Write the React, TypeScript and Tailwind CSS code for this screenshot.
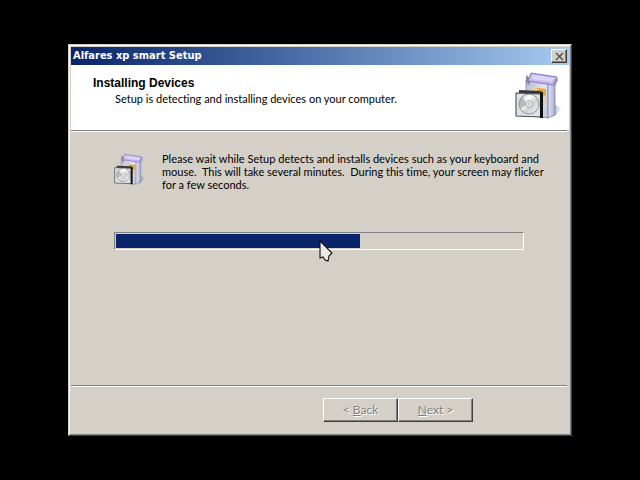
import { useId } from "react";

interface SetupIconProps {
  className?: string;
}

// Software box with a CD case leaning against it
const SetupIcon: React.FC<SetupIconProps> = ({ className }) => {
  const id = useId();
  const front = `${id}-front`;
  const side = `${id}-side`;
  const disc = `${id}-disc`;
  const shadow = `${id}-shadow`;

  return (
    <svg viewBox="0 0 48 48" className={className} aria-hidden="true">
      <defs>
        <linearGradient id={front} x1="0" y1="0" x2="1" y2="1">
          <stop offset="0" stopColor="#b4b9d6" />
          <stop offset="0.5" stopColor="#dfe3f3" />
          <stop offset="1" stopColor="#c3c8e0" />
        </linearGradient>
        <linearGradient id={side} x1="0" y1="0" x2="1" y2="0">
          <stop offset="0" stopColor="#e3e5f4" />
          <stop offset="1" stopColor="#a9adcd" />
        </linearGradient>
        <linearGradient id={disc} x1="0" y1="0" x2="1" y2="1">
          <stop offset="0" stopColor="#b9bebe" />
          <stop offset="0.35" stopColor="#ffffff" />
          <stop offset="0.6" stopColor="#cfd3d4" />
          <stop offset="1" stopColor="#f4f6f6" />
        </linearGradient>
        <linearGradient id={shadow} x1="0" y1="0" x2="1" y2="0">
          <stop offset="0" stopColor="#5d6078" stopOpacity="0.7" />
          <stop offset="1" stopColor="#5d6078" stopOpacity="0" />
        </linearGradient>
      </defs>
      <path d="M34 46 L40 34 L47 37 L41 44 Z" fill={`url(#${shadow})`} />
      <path d="M11 9 L33 12 V47 L11 44 Z" fill={`url(#${front})`} stroke="#7c80a2" strokeWidth="0.8" />
      <path d="M33 12 L40 9 V44 L33 47 Z" fill={`url(#${side})`} stroke="#7c80a2" strokeWidth="0.8" />
      <path d="M11 4 L16 8 L14 14 L11 11 Z" fill="#84889f" />
      <path d="M16 2 L42 6 L38 14 L13 10 Z" fill="#c3b9ee" stroke="#857bbd" strokeWidth="1" />
      <path d="M18 4 L39 7 L37 11 L16 8 Z" fill="#dcd6f8" />
      <path d="M42 6 L43 9 L40 15 L38 14 Z" fill="#9a90d0" />
      <path d="M17 16 L31 18 V32 L17 30 Z" fill="#ead19a" />
      <path d="M22 17 L31 18 V25 L24 24 Z" fill="#e6a544" />
      <path d="M4 22 V19 L26 20 L28 22 V25 Z" fill="#34383a" />
      <path d="M1 22 L26 23 V46 L1 45 Z" fill="#dfe2e4" stroke="#4a4e51" strokeWidth="1.1" />
      <path d="M25 22 L28 21 V47 L25 47 Z" fill="#0e1012" />
      <ellipse cx="14" cy="33" rx="10" ry="10" fill={`url(#${disc})`} stroke="#858b8d" strokeWidth="0.9" />
      <path d="M7 26 A10 10 0 0 0 5 38 L11 34 L11 31 Z" fill="#9aa1a3" opacity="0.7" />
      <circle cx="14" cy="33" r="3.5" fill="#eceeee" stroke="#969c9e" strokeWidth="0.8" />
      <circle cx="14" cy="33" r="1.2" fill="#ffffff" stroke="#898f92" strokeWidth="0.6" />
    </svg>
  );
};

const Separator = () => (
  <div className="mr-[2px] h-[2px] border-t border-b border-t-[#808080] border-b-white" />
);

interface WizardButtonProps {
  children: React.ReactNode;
}

const WizardButton: React.FC<WizardButtonProps> = ({ children }) => (
  <button
    type="button"
    disabled
    className="h-6 w-[75px] border border-t-white border-l-white border-r-[#404040] border-b-[#404040] bg-[#d4d0c8] text-[12px] text-[#808080] shadow-[inset_-1px_-1px_0_#808080] [text-shadow:1px_1px_0_#fff]"
  >
    {children}
  </button>
);

const PROGRESS = 60;

export default function App() {
  return (
    <div className="flex min-h-screen items-center justify-center bg-black font-[Lato,Arial,sans-serif] text-[11px] text-black [font-variant-ligatures:none]">
      <main className="w-full max-w-[504px] border border-t-[#d4d0c8] border-l-[#d4d0c8] border-r-[#404040] border-b-[#404040] bg-[#d4d0c8]">
        <div className="border border-t-white border-l-white border-r-[#808080] border-b-[#808080] p-px">
          <div className="flex h-[18px] items-center justify-between bg-linear-to-r from-[#0a246a] to-[#a6caf0] px-[2px]">
            <h1 className="font-['DejaVu_Sans_Condensed','DejaVu_Sans',Tahoma,sans-serif] text-[11px] leading-4 font-bold text-white">
              Alfares xp smart Setup
            </h1>
            <button
              type="button"
              aria-label="Close"
              className="flex h-[14px] w-4 items-center justify-center border border-t-white border-l-white border-r-[#404040] border-b-[#404040] bg-[#d4d0c8] shadow-[inset_-1px_-1px_0_#808080]"
            >
              <svg viewBox="0 0 9 9" className="size-[9px]" aria-hidden="true">
                <path d="M1 1 L8 8 M8 1 L1 8" stroke="#4c4c4c" strokeWidth="1.4" />
              </svg>
            </button>
          </div>

          <header className="flex justify-between bg-white pt-[6px] pr-[6px] pb-[11px] pl-[22px]">
            <div className="pt-[5px] leading-[15px]">
              <h2 className="font-['Liberation_Sans',Arial,sans-serif] text-[12px] font-bold">
                Installing Devices
              </h2>
              <p className="pl-[22px]">Setup is detecting and installing devices on your computer.</p>
            </div>
            <SetupIcon className="size-12 shrink-0" />
          </header>
          <Separator />

          <section className="pt-5 pb-[135px] pl-[43px]">
            <div className="flex gap-4 pr-[21px]">
              <SetupIcon className="mt-px size-8 shrink-0" />
              <p className="leading-[13px]">
                Please wait while Setup detects and installs devices such as your keyboard and
                <br />
                mouse.&nbsp; This will take several minutes.&nbsp; During this time, your screen may flicker
                <br />
                for a few seconds.
              </p>
            </div>
            <div
              role="progressbar"
              aria-label="Installing devices"
              aria-valuemin={0}
              aria-valuemax={100}
              aria-valuenow={PROGRESS}
              className="relative mt-[41px] mr-[45px] h-[18px] border border-t-[#808080] border-l-[#808080] border-r-white border-b-white p-px"
            >
              <div className="h-full bg-[#0a246a]" style={{ width: `${PROGRESS}%` }} />
              {/* mouse pointer */}
              <svg viewBox="0 0 14 23" className="absolute top-[7px] left-1/2 h-[23px] w-[14px]" aria-hidden="true">
                <path
                  d="M1 1 L1 18 L4 17 L6 20 L9 21 L10 16 L13 13 Z"
                  fill="#ece9e4"
                  stroke="#111111"
                  strokeWidth="1.1"
                />
              </svg>
            </div>
          </section>

          <Separator />
          <footer className="flex justify-end pt-[11px] pr-24 pb-[11px]">
            <WizardButton>
              &lt; <u>B</u>ack
            </WizardButton>
            <WizardButton>
              <u>N</u>ext &gt;
            </WizardButton>
          </footer>
        </div>
      </main>
    </div>
  );
}
